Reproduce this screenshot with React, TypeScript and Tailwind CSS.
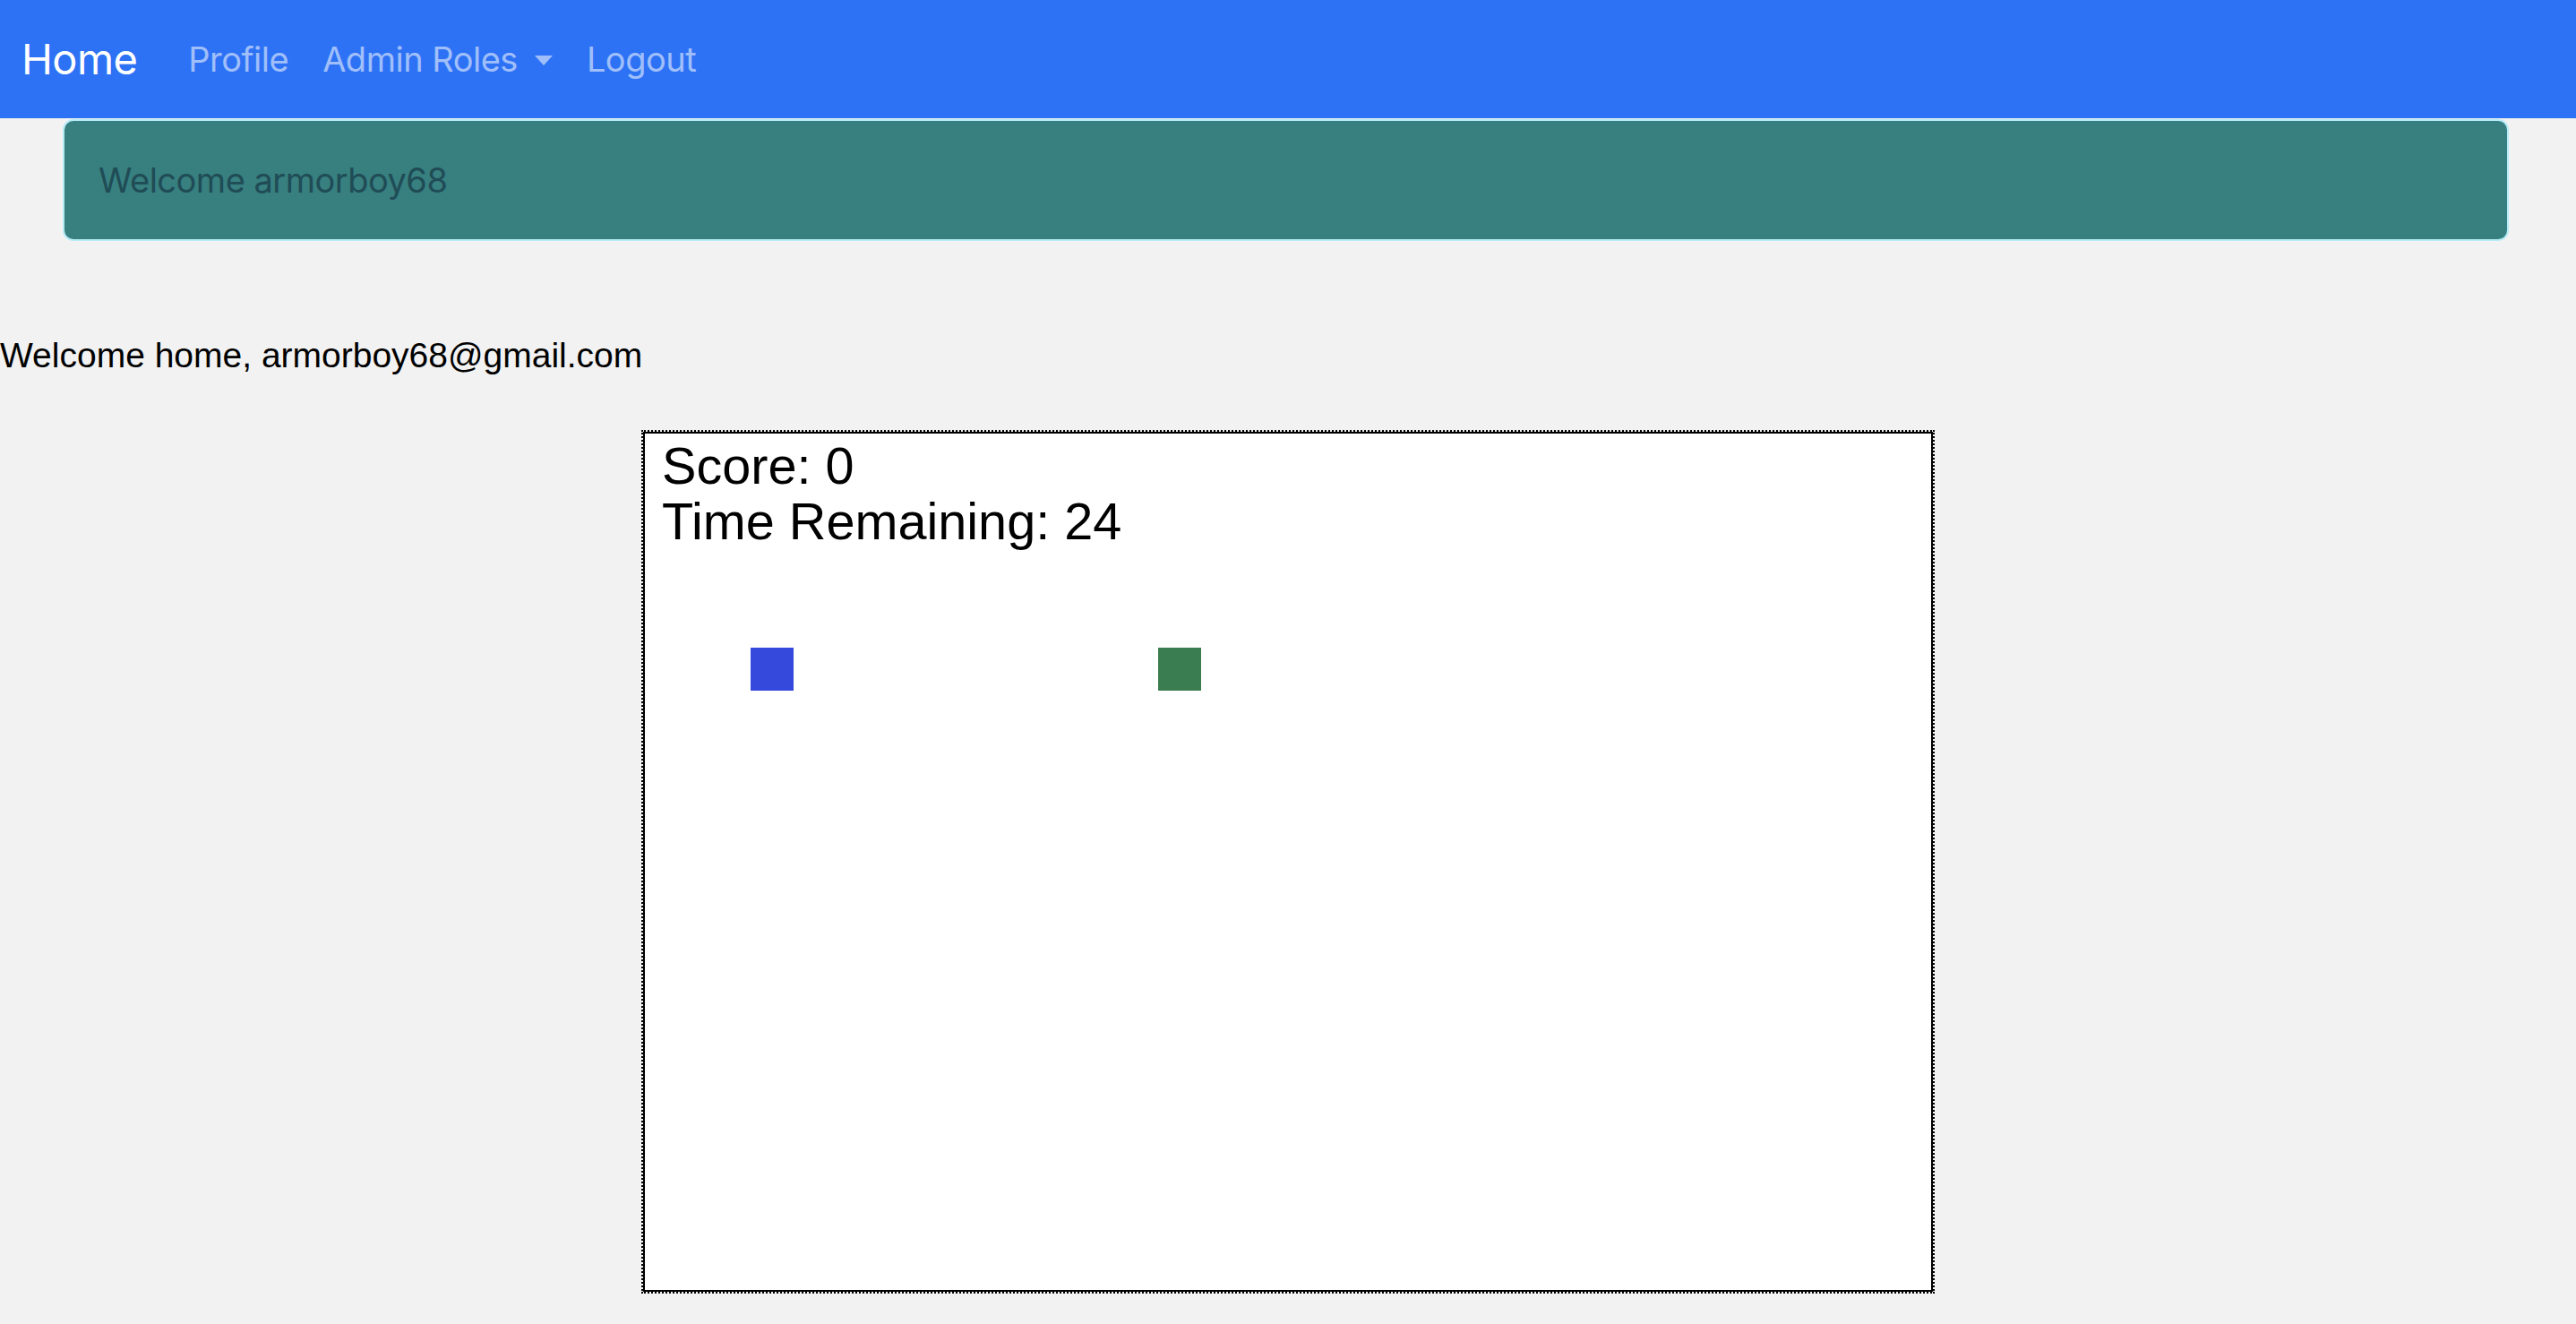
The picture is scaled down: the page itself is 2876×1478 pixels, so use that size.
import React from 'react';

const navLinks = ['Profile', 'Admin Roles', 'Logout'];

function NavBar() {
  return (
    <nav className="h-[132px] bg-[#2d72f5] flex items-center pl-[24px] font-['Inter',sans-serif]">
      <a className="text-white text-[47px] tracking-[-0.6px] mr-[38px]">Home</a>
      <ul className="flex items-center">
        {navLinks.map((l) => (
          <li key={l} className="px-[19px] text-[38px] tracking-[-0.5px] text-[#a0bffa] flex items-center">
            {l}
            {l === 'Admin Roles' && (
              <span className="ml-[19px] mt-[2px] w-0 h-0 border-t-[11px] border-t-[#a0bffa] border-x-[10px] border-x-transparent" />
            )}
          </li>
        ))}
      </ul>
    </nav>
  );
}

function GameCanvas() {
  return (
    <div className="relative mx-auto w-[1440px] h-[960px] bg-white border-2 border-black outline-2 outline-dotted outline-black font-['Liberation_Sans',Arial,sans-serif] text-black">
      <div className="absolute left-[19px] top-[8px] text-[57.6px] leading-none whitespace-nowrap">Score: 0</div>
      <div className="absolute left-[19px] top-[70px] text-[57.6px] leading-none whitespace-nowrap">Time Remaining: 24</div>
      <div className="absolute left-[118px] top-[239px] w-[48px] h-[48px] bg-[#3649dd]" />
      <div className="absolute left-[573px] top-[239px] w-[48px] h-[48px] bg-[#3a7d50]" />
    </div>
  );
}

export default function App() {
  return (
    <div className="w-full min-h-screen bg-[#f2f2f2]">
      <NavBar />
      <div className="ml-[70px] mr-[75px] mt-[1px] h-[136px] bg-[#387f80] border-2 border-[#b6ecf7] rounded-[12px] flex items-center pl-[38px] font-['Inter',sans-serif] text-[38px] tracking-[-0.5px] text-[#1f4c55]">
        Welcome armorboy68
      </div>
      <p className="mt-[108px] text-[39px] leading-none text-black font-['Liberation_Sans',Arial,sans-serif]">
        Welcome home, armorboy68@gmail.com
      </p>
      <div className="mt-[66px] pb-[36px]">
        <GameCanvas />
      </div>
    </div>
  );
}
